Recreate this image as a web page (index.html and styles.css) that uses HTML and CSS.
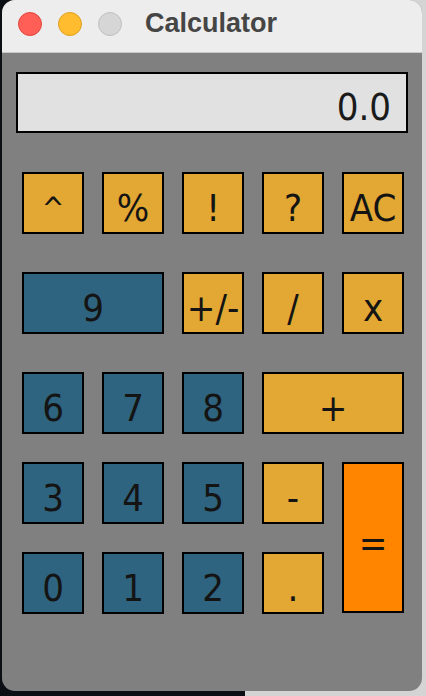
FILE: index.html
```html
<!DOCTYPE html>
<html>
<head>
<meta charset="utf-8">
<link rel="stylesheet" href="styles.css">
</head>
<body>
<div class="window">
  <div class="titlebar">
    <div class="lights">
      <span class="light red"></span>
      <span class="light yellow"></span>
      <span class="light gray"></span>
    </div>
    <div class="title">Calculator</div>
  </div>
  <div class="content">
    <div class="display">0.0</div>
    <div class="keys">
      <div class="key op small">^</div>
      <div class="key op">%</div>
      <div class="key op">!</div>
      <div class="key op">?</div>
      <div class="key op">AC</div>

      <div class="key num span2">9</div>
      <div class="key op">+/-</div>
      <div class="key op">/</div>
      <div class="key op">x</div>

      <div class="key num">6</div>
      <div class="key num">7</div>
      <div class="key num">8</div>
      <div class="key op span2">+</div>

      <div class="key num">3</div>
      <div class="key num">4</div>
      <div class="key num">5</div>
      <div class="key op">-</div>
      <div class="key eq">=</div>

      <div class="key num">0</div>
      <div class="key num">1</div>
      <div class="key num">2</div>
      <div class="key op">.</div>
    </div>
  </div>
</div>
</body>
</html>
```
FILE: styles.css
```css
html, body {
  margin: 0;
  padding: 0;
}
body {
  width: 426px;
  height: 696px;
  overflow: hidden;
  background: linear-gradient(to right, #0c0f14 0, #0c0f14 245px, #d4d4d4 245px);
}
.window {
  margin-left: 2px;
  width: 420px;
  height: 691px;
  border-radius: 13px;
  overflow: hidden;
  display: flex;
  flex-direction: column;
  background: #808080;
}
.titlebar {
  flex: none;
  background: #ecedec;
  border-bottom: 1px solid #c9c9c9;
  display: flex;
  align-items: center;
  box-sizing: border-box;
  height: 53px;
}
.lights {
  display: flex;
  gap: 16px;
  margin-left: 16px;
  margin-top: -4px;
}
.light {
  width: 22px;
  height: 22px;
  border-radius: 50%;
  border: 1px solid transparent;
}
.red { background: #ff5f57; border-color: #e2463f; }
.yellow { background: #febc2e; border-color: #dfa023; }
.gray { background: #d6d6d6; border-color: #bfbfbf; }
.title {
  margin-left: 23px;
  margin-top: -6px;
  font-family: "Liberation Sans", Arial, sans-serif;
  font-weight: bold;
  font-size: 27px;
  color: #454545;
}
.content {
  flex: 1;
  padding: 19px 0 0 14px;
}
.display {
  width: 392px;
  height: 61px;
  box-sizing: border-box;
  border: 2px solid #000;
  background: #e1e1e1;
  font-family: "Liberation Sans Narrow", "DejaVu Sans Condensed", sans-serif;
  font-size: 38px;
  color: #1a1a1a;
  text-align: right;
  padding: 9px 15px 0 0;
  line-height: 48px;
}
.keys {
  margin: 39px 0 0 6px;
  display: grid;
  grid-template-columns: repeat(5, 62px);
  grid-template-rows: 100px 100px 90px 90px 62px;
  column-gap: 18px;
}
.key {
  height: 62px;
  box-sizing: border-box;
  border: 2px solid #000;
  display: flex;
  align-items: center;
  justify-content: center;
  padding-top: 10px;
  font-family: "Liberation Sans Narrow", "DejaVu Sans Condensed", sans-serif;
  font-size: 38px;
  color: #141414;
  align-self: start;
}
.small { font-size: 30px; }
.op { background: #e2a833; }
.num { background: #2f6480; }
.eq {
  background: #ff8500;
  grid-row: span 2;
  height: auto;
  align-self: stretch;
  margin-bottom: 1px;
}
.span2 { grid-column: span 2; }
```
